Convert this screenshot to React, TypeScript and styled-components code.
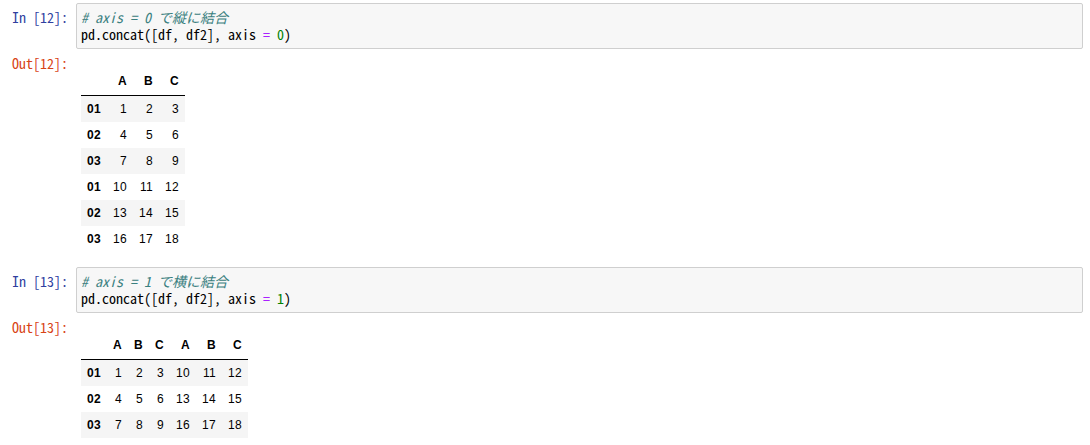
import React from "react";
import styled, { createGlobalStyle } from "styled-components";

const GlobalStyle = createGlobalStyle`
  html, body {
    margin: 0;
    padding: 0;
    background: #fff;
  }
`;

const mono = `"Noto Sans Mono CJK JP", "Liberation Mono", "Noto Sans CJK JP", monospace`;

const Notebook = styled.div`
  padding: 3px 7px 0 0;
  display: flex;
  flex-direction: column;
  gap: 15px;
`;

const Cell = styled.div`
  display: flex;
  flex-direction: column;
`;

const Row = styled.div`
  display: flex;
  align-items: flex-start;
`;

const Prompt = styled.div<{ $out?: boolean }>`
  width: 76px;
  flex: none;
  box-sizing: border-box;
  padding: ${(p) => (p.$out ? "0" : "6px")} 8px 0 0;
  text-align: right;
  font-family: ${mono};
  font-size: 14px;
  line-height: 17px;
  color: ${(p) => (p.$out ? "#D84315" : "#303F9F")};
  white-space: pre;
`;

const InputArea = styled.div`
  flex: 1;
  border: 1px solid #cfcfcf;
  border-radius: 2px;
  background: #f7f7f7;
  padding: 5px 4px;
  font-family: ${mono};
  font-size: 14px;
  line-height: 17px;
  color: #000;
  white-space: pre;
`;

const Line = styled.div``;

const Comment = styled.span`
  color: #3a8080;
  font-style: italic;
`;

const Op = styled.span`
  color: #aa22ff;
`;

const Num = styled.span`
  color: #008000;
`;

const OutputRow = styled(Row)`
  margin-top: 6px;
`;

const OutputArea = styled.div`
  padding: 13px 0 0 5px;
`;

const Table = styled.table`
  border-collapse: collapse;
  border-spacing: 0;
  font-family: "Liberation Sans", Arial, sans-serif;
  font-size: 12px;
  line-height: 14px;
  letter-spacing: 0.33px;
  color: #000;

  th, td {
    padding: 6px;
    text-align: right;
    vertical-align: middle;
  }
  th {
    font-weight: bold;
  }
  thead th {
    padding-bottom: 7px;
    border-bottom: 1px solid #000;
  }
  tbody tr:nth-child(odd) {
    background: #f5f5f5;
  }
`;

type Frame = { cols: string[]; rows: [string, number[]][] };

const df0: Frame = {
  cols: ["A", "B", "C"],
  rows: [
    ["01", [1, 2, 3]],
    ["02", [4, 5, 6]],
    ["03", [7, 8, 9]],
    ["01", [10, 11, 12]],
    ["02", [13, 14, 15]],
    ["03", [16, 17, 18]],
  ],
};

const df1: Frame = {
  cols: ["A", "B", "C", "A", "B", "C"],
  rows: [
    ["01", [1, 2, 3, 10, 11, 12]],
    ["02", [4, 5, 6, 13, 14, 15]],
    ["03", [7, 8, 9, 16, 17, 18]],
  ],
};

function DataFrame({ data }: { data: Frame }) {
  return (
    <Table>
      <thead>
        <tr>
          <th></th>
          {data.cols.map((c, i) => (
            <th key={i}>{c}</th>
          ))}
        </tr>
      </thead>
      <tbody>
        {data.rows.map(([idx, vals], r) => (
          <tr key={r}>
            <th>{idx}</th>
            {vals.map((v, i) => (
              <td key={i}>{v}</td>
            ))}
          </tr>
        ))}
      </tbody>
    </Table>
  );
}

function CodeCell({ n, axis, word, data }: { n: number; axis: number; word: string; data: Frame }) {
  return (
    <Cell>
      <Row>
        <Prompt>{`In [${n}]:`}</Prompt>
        <InputArea>
          <Line>
            <Comment>{`# axis = ${axis} で${word}に結合`}</Comment>
          </Line>
          <Line>
            {"pd.concat([df, df2], axis "}
            <Op>=</Op> <Num>{axis}</Num>)
          </Line>
        </InputArea>
      </Row>
      <OutputRow>
        <Prompt $out>{`Out[${n}]:`}</Prompt>
        <OutputArea>
          <DataFrame data={data} />
        </OutputArea>
      </OutputRow>
    </Cell>
  );
}

export default function App() {
  return (
    <>
      <GlobalStyle />
      <Notebook>
        <CodeCell n={12} axis={0} word="縦" data={df0} />
        <CodeCell n={13} axis={1} word="横" data={df1} />
      </Notebook>
    </>
  );
}
